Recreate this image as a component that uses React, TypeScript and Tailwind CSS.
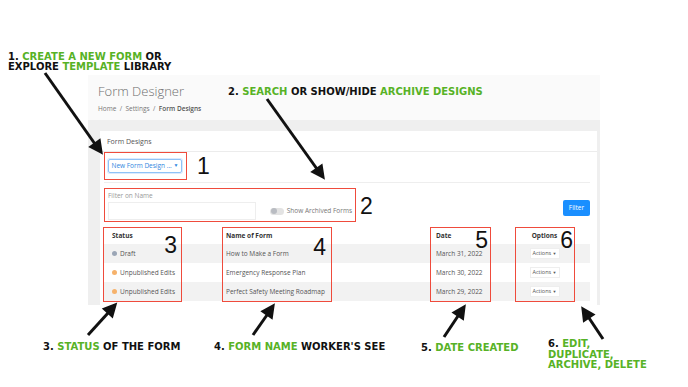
const rows = [
  { status: 'Draft', dot: 'bg-[#9ba6b6]', name: 'How to Make a Form', date: 'March 31, 2022', bg: 'bg-[#f2f2f2]' },
  { status: 'Unpublished Edits', dot: 'bg-[#f6b26b]', name: 'Emergency Response Plan', date: 'March 30, 2022', bg: 'bg-white' },
  { status: 'Unpublished Edits', dot: 'bg-[#f6b26b]', name: 'Perfect Safety Meeting Roadmap', date: 'March 29, 2022', bg: 'bg-[#f2f2f2]' },
];

const Green = ({ children }: { children: React.ReactNode }) => <span className="text-[#57b226]">{children}</span>;

const Arrows = () => (
  <svg className="pointer-events-none absolute inset-0" width="688" height="387" viewBox="0 0 688 387">
    <g stroke="#111" strokeWidth="3" fill="#111">
      <line x1="45" y1="73" x2="95" y2="144" />
      <polygon points="101,152 91.1,146.7 99.3,140.9" />
      <line x1="267" y1="99" x2="317" y2="169" />
      <polygon points="323,177 313.1,171.8 321.3,166" />
      <line x1="88" y1="335" x2="108" y2="313" />
      <polygon points="115,305 112,315.8 104.6,309.1" />
      <line x1="253" y1="335" x2="267" y2="315" />
      <polygon points="273,306 271.4,317.1 263.2,311.4" />
      <line x1="444" y1="337" x2="458" y2="316" />
      <polygon points="464,307 462.6,318.1 454.3,312.5" />
      <line x1="603" y1="339" x2="589" y2="318" />
      <polygon points="583,309 592.7,314.5 584.3,320.1" />
    </g>
  </svg>
);

export default function App() {
  return (
    <div className="relative h-[387px] w-[688px] overflow-hidden bg-white font-['Open_Sans',sans-serif]">
      {/* screenshot panel */}
      <div className="ml-[88px] mt-[75px] flex h-[230px] w-[512px] flex-col bg-[#efefef]">
        <div className="h-[45px] bg-[#fafafa] pl-[10px] pt-[8px]">
          <div className="text-[13px] leading-[16px] font-light text-[#6f6f6f]">Form Designer</div>
          <div className="mt-[5px] text-[6.5px] leading-[9px] text-[#777]">
            Home&nbsp; /&nbsp; Settings&nbsp; /&nbsp; <b className="font-semibold text-[#555]">Form Designs</b>
          </div>
        </div>
        <div className="ml-[12px] mr-[3px] mt-[11px] flex flex-1 flex-col bg-white">
          <div className="h-[21px] border-b border-[#ececec] pl-[7px] pt-[6px] text-[7px] leading-[10px] text-[#555]">Form Designs</div>
          <div className="pl-[4px] pr-[7px]">
            <div className="flex items-center border-b border-[#eee] pb-[2px]">
              <div className="flex h-[28px] w-[83px] items-center border-[1.5px] border-[#ef4b3c] pl-[3px]">
                <div className="flex h-[14px] w-[74px] items-center justify-center rounded-[2px] border border-[#8fc3f7] text-[6.5px] text-[#2f86e0] shadow-[0_0_0_1px_#dbeafe]">
                  New Form Design ...&nbsp;<span className="text-[5px]">▼</span>
                </div>
              </div>
              <span className="ml-[10px] font-['Liberation_Sans',sans-serif] text-[23px] leading-none text-[#111]">1</span>
            </div>

            <div className="mt-[5px] flex items-center">
              <div className="h-[34px] w-[252px] border-[1.5px] border-[#ef4b3c] px-[3px] pt-[3px]">
                <div className="text-[6.5px] leading-[8px] text-[#999]">Filter on Name</div>
                <div className="mt-[2px] flex items-center">
                  <div className="h-[18px] w-[151px] border border-[#eee] bg-white" />
                  <div className="ml-[14px] flex h-[7px] w-[14px] items-center rounded-full bg-[#e3e3e3] pl-[1px]">
                    <div className="h-[6px] w-[6px] rounded-full bg-[#b9bcc2]" />
                  </div>
                  <span className="ml-[3px] whitespace-nowrap text-[6.5px] text-[#777]">Show Archived Forms</span>
                </div>
              </div>
              <span className="ml-[4px] mt-[2px] font-['Liberation_Sans',sans-serif] text-[23px] leading-none text-[#111]">2</span>
              <button className="ml-auto mt-[6px] h-[16px] w-[27px] rounded-[2px] bg-[#1a8fff] text-[6.5px] text-white">Filter</button>
            </div>

            <div className="relative mt-[5px] text-[6.5px] text-[#555]">
              <div className="grid h-[17px] grid-cols-[116px_212px_81px_63px] items-center font-bold text-[#333]">
                <span className="pl-[8px]">Status</span>
                <span className="pl-[6px]">Name of Form</span>
                <span className="pl-[4px]">Date</span>
                <span className="text-center">Options</span>
              </div>
              {rows.map((r, i) => (
                <div key={i} className={`grid h-[19px] grid-cols-[116px_212px_81px_63px] items-center ${r.bg}`}>
                  <span className="flex items-center pl-[8px]">
                    <span className={`mr-[3px] h-[5px] w-[5px] rounded-full ${r.dot}`} />
                    {r.status}
                  </span>
                  <span className="pl-[6px]">{r.name}</span>
                  <span className="pl-[4px]">{r.date}</span>
                  <span className="flex justify-center">
                    <span className="flex h-[11px] w-[30px] items-center justify-center border border-[#eee] bg-white text-[5.5px] text-[#555]">
                      Actions&nbsp;<span className="text-[4px]">▼</span>
                    </span>
                  </span>
                </div>
              ))}

              {/* annotation boxes */}
              <div className="absolute left-[-1px] top-0 h-[75px] w-[79px] border-[1.5px] border-[#ef4b3c]">
                <span className="absolute right-[4px] top-[6px] font-['Liberation_Sans',sans-serif] text-[23px] leading-none text-[#111]">3</span>
              </div>
              <div className="absolute left-[118px] top-0 h-[75px] w-[110px] border-[1.5px] border-[#ef4b3c]">
                <span className="absolute right-[5px] top-[8px] font-['Liberation_Sans',sans-serif] text-[23px] leading-none text-[#111]">4</span>
              </div>
              <div className="absolute left-[326px] top-0 h-[75px] w-[61px] border-[1.5px] border-[#ef4b3c]">
                <span className="absolute right-[2px] top-[1px] font-['Liberation_Sans',sans-serif] text-[23px] leading-none text-[#111]">5</span>
              </div>
              <div className="absolute left-[411px] top-0 h-[75px] w-[60px] border-[1.5px] border-[#ef4b3c]">
                <span className="absolute right-[1px] top-[1px] font-['Liberation_Sans',sans-serif] text-[23px] leading-none text-[#111]">6</span>
              </div>
            </div>
          </div>
        </div>
      </div>

      {/* callout labels */}
      <div className="font-['DejaVu_Sans',sans-serif] text-[10px] leading-[10px] font-bold text-[#111]">
        <div className="absolute left-[8px] top-[52px] whitespace-nowrap">
          1. <Green>CREATE A NEW FORM</Green> OR<br />EXPLORE <Green>TEMPLATE</Green> LIBRARY
        </div>
        <div className="absolute left-[228px] top-[87px] whitespace-nowrap">
          2. <Green>SEARCH</Green> OR SHOW/HIDE <Green>ARCHIVE DESIGNS</Green>
        </div>
        <div className="absolute left-[43px] top-[342px] whitespace-nowrap">
          3. <Green>STATUS</Green> OF THE FORM
        </div>
        <div className="absolute left-[214px] top-[342px] whitespace-nowrap">
          4. <Green>FORM NAME</Green> WORKER'S SEE
        </div>
        <div className="absolute left-[421px] top-[343px] whitespace-nowrap">
          5. <Green>DATE CREATED</Green>
        </div>
        <div className="absolute left-[548px] top-[339px] whitespace-nowrap leading-[10.5px]">
          6. <Green>EDIT,</Green><br /><Green>DUPLICATE,</Green><br /><Green>ARCHIVE, DELETE</Green>
        </div>
      </div>

      <Arrows />
    </div>
  );
}
